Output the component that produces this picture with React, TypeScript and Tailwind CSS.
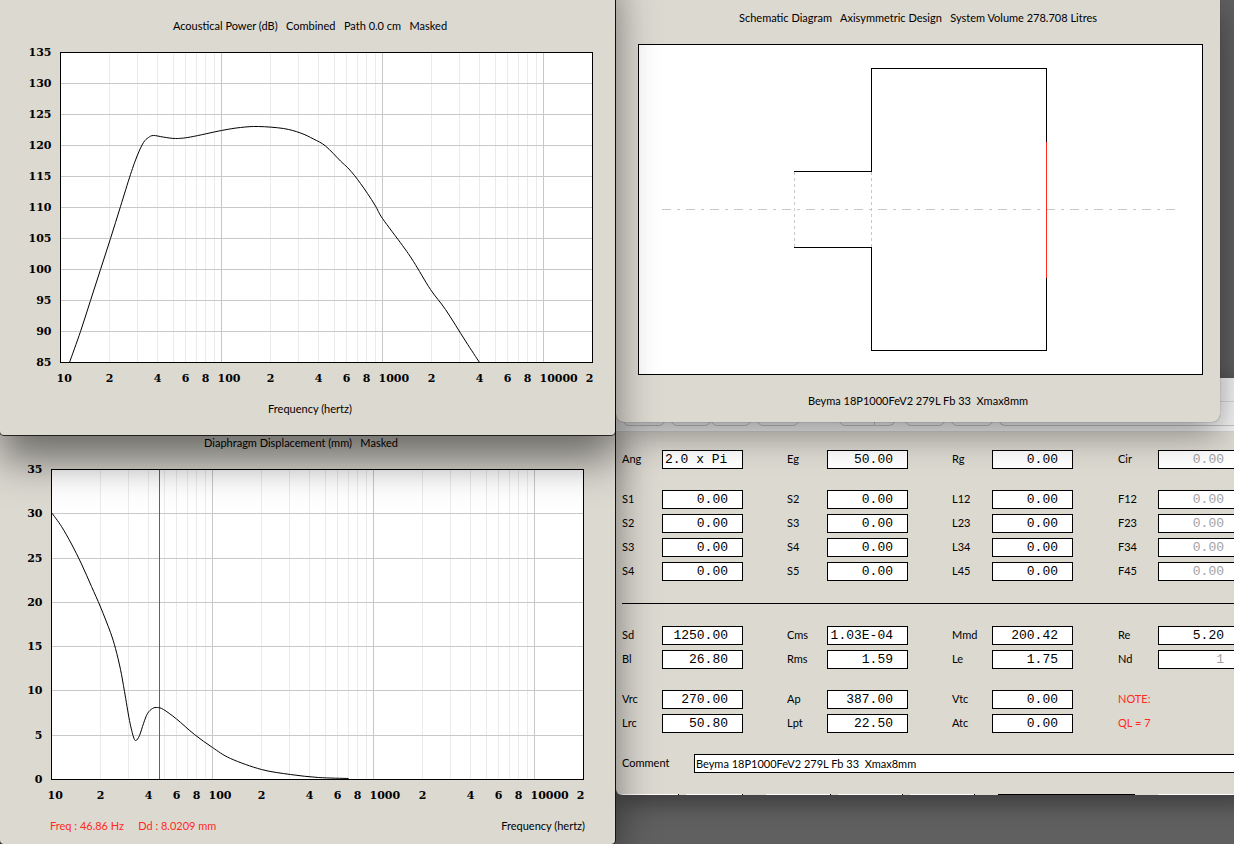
import type { ReactNode } from "react";

type Point = [number, number];

type ChartProps = {
    label: string;
    yLabels: number[];
    points: Point[];
    cursor?: number;
};

type Field = {
    name: string;
    value: string;
    disabled?: boolean;
    left?: boolean;
};

const PLOT_W = 532;
const PLOT_H = 310;
const DECADE = 161;

const powerCurve: Point[] = [
    [9, 310], [20, 279], [30, 248], [40, 217], [50, 186], [60, 154], [70, 122],
    [77, 102.5], [83, 90], [88, 85], [93, 83], [103, 84.6], [115, 86],
    [130, 84.5], [161, 78], [180, 75], [198, 74], [223, 76], [240, 80.5],
    [253, 86.5], [265, 93.5], [280, 108.5], [287, 115], [294, 123], [300, 131],
    [307, 141], [315, 153.5], [322, 166], [342, 193], [353, 209],
    [370, 237], [385, 257], [405, 288.5], [419, 310],
];

const displacementCurve: Point[] = [
    [0, 43], [10, 57], [20, 74.5], [30, 94.5], [40, 117], [49, 137.5], [59, 163],
    [64, 179], [69, 200], [73, 222], [78, 251], [82, 267.5], [84.5, 271],
    [88, 266], [92, 254], [96, 244], [101, 239], [106, 238], [112, 240],
    [125, 249.5], [143, 265], [161, 278], [179, 289], [210, 300],
    [239, 305], [267, 308], [297, 309],
];

// Catmull-Rom spline through the sample points
function toPath(points: Point[]) {
    let d = `M${points[0][0]} ${points[0][1]}`;
    for (let i = 0; i < points.length - 1; i++) {
        const p0 = points[i - 1] ?? points[i];
        const p1 = points[i];
        const p2 = points[i + 1];
        const p3 = points[i + 2] ?? p2;
        d += ` C${p1[0] + (p2[0] - p0[0]) / 6} ${p1[1] + (p2[1] - p0[1]) / 6}`;
        d += ` ${p2[0] - (p3[0] - p1[0]) / 6} ${p2[1] - (p3[1] - p1[1]) / 6}`;
        d += ` ${p2[0]} ${p2[1]}`;
    }
    return d;
}

function Chart({ label, yLabels, points, cursor }: ChartProps) {
    const verticals: { x: number; n: number; decade: number }[] = [];
    for (let decade = 0; decade < 4; decade++) {
        for (let n = 1; n < 10; n++) {
            const x = Math.floor(DECADE * (decade + Math.log10(n)) + 0.6);
            if (x <= PLOT_W - 2) verticals.push({ x, n, decade });
        }
    }
    const step = PLOT_H / (yLabels.length - 1);

    return (
        <svg
            width="580"
            height="347"
            role="img"
            aria-label={label}
            className="block font-['DejaVu_Serif',serif] text-[11px] font-bold"
        >
            <g transform="translate(34.5 10.5)">
                <rect width={PLOT_W} height={PLOT_H} fill="#fff" />
                <g shapeRendering="crispEdges" fill="none">
                    {verticals.map(({ x, n }) => n > 1 && (
                        <path key={x} d={`M${x} 0V${PLOT_H}`} stroke="#ebebeb" />
                    ))}
                    {yLabels.map((y, i) => (
                        <path key={y} d={`M0 ${Math.round(i * step)}H${PLOT_W}`} stroke="#c8c8c8" />
                    ))}
                    {verticals.map(({ x, n }) => n === 1 && (
                        <path key={x} d={`M${x} 0V${PLOT_H}`} stroke="#c8c8c8" />
                    ))}
                    <rect width={PLOT_W} height={PLOT_H} stroke="#000" />
                    {cursor && <path d={`M${cursor} 0V${PLOT_H - 1}`} stroke="#f0281c" />}
                </g>
                <path d={toPath(points)} fill="none" stroke="#000" />
                {yLabels.map((y, i) => (
                    <text key={y} x="-9" y={Math.round(i * step) + 3} textAnchor="end">{y}</text>
                ))}
                {verticals.map(({ x, n, decade }) => {
                    if (n === 1) {
                        return <text key={x} x={x - 4} y="329">{10 ** (decade + 1)}</text>;
                    }
                    return n % 2 === 0 && (
                        <text key={x} x={x} y="329" textAnchor="middle">{n}</text>
                    );
                })}
                <text x={PLOT_W + 1} y="329" textAnchor="end">2</text>
            </g>
        </svg>
    );
}

function Schematic() {
    return (
        <svg width="565" height="331" role="img" aria-label="Schematic diagram" className="block">
            <g fill="none" stroke="#000" shapeRendering="crispEdges" transform="translate(.5 .5)">
                <rect width="564" height="330" fill="#fff" />
                <path d="M23 165H537" stroke="#c8c8c8" strokeDasharray="9 6 3 6" />
                <path d="M156 127V203M233 127V203" stroke="#c8c8c8" strokeDasharray="3 3" />
                <path d="M155 127H233V24H408V306H233V203H155" />
                <path d="M408 97V233" stroke="#ff2a1c" />
            </g>
        </svg>
    );
}

function Row({ fields, children }: { fields: Field[]; children?: ReactNode }) {
    return (
        <div className="grid grid-cols-[165px_165px_166px_121px] h-6 items-center">
            {fields.map((field) => (
                <label key={field.name} className="flex items-center">
                    <span className="w-10">{field.name}</span>
                    <input
                        defaultValue={field.value}
                        disabled={field.disabled}
                        className={`w-[81px] h-[19px] border border-black bg-white pl-0.5 pr-3.5 font-['Liberation_Mono',monospace] text-[13px] disabled:text-neutral-400 ${field.left ? "text-left" : "text-right"}`}
                    />
                </label>
            ))}
            {children}
        </div>
    );
}

const zero = "0.00";

function ParameterForm() {
    return (
        <form className="pl-1.5 pt-[15px]">
            <Row
                fields={[
                    { name: "Ang", value: "2.0 x Pi", left: true },
                    { name: "Eg", value: "50.00" },
                    { name: "Rg", value: zero },
                    { name: "Cir", value: zero, disabled: true },
                ]}
            />
            <div className="mt-4">
                {[1, 2, 3, 4].map((n) => (
                    <Row
                        key={n}
                        fields={[
                            { name: `S${n}`, value: zero },
                            { name: `S${n + 1}`, value: zero },
                            { name: `L${n}${n + 1}`, value: zero },
                            { name: `F${n}${n + 1}`, value: zero, disabled: true },
                        ]}
                    />
                ))}
            </div>
            <hr className="mb-[19px] mt-5 border-black" />
            <Row
                fields={[
                    { name: "Sd", value: "1250.00" },
                    { name: "Cms", value: "1.03E-04" },
                    { name: "Mmd", value: "200.42" },
                    { name: "Re", value: "5.20" },
                ]}
            />
            <Row
                fields={[
                    { name: "Bl", value: "26.80" },
                    { name: "Rms", value: "1.59" },
                    { name: "Le", value: "1.75" },
                    { name: "Nd", value: "1", disabled: true },
                ]}
            />
            <div className="mt-4">
                <Row
                    fields={[
                        { name: "Vrc", value: "270.00" },
                        { name: "Ap", value: "387.00" },
                        { name: "Vtc", value: zero },
                    ]}
                >
                    <span className="text-[#ff2a1c]">NOTE:</span>
                </Row>
                <Row
                    fields={[
                        { name: "Lrc", value: "50.80" },
                        { name: "Lpt", value: "22.50" },
                        { name: "Atc", value: zero },
                    ]}
                >
                    <span className="text-[#ff2a1c]">QL = 7</span>
                </Row>
            </div>
            <label className="mt-4 flex h-6 items-center">
                <span className="w-[72px]">Comment</span>
                <input
                    defaultValue="Beyma 18P1000FeV2 279L Fb 33  Xmax8mm"
                    className="h-[19px] flex-1 border border-black bg-white px-px"
                />
            </label>
        </form>
    );
}

function Toolbar() {
    const button = "h-5 rounded-md border border-[#c4c4c4]";
    return (
        <div className="bg-[#f4f4f4]">
            <div className="h-6 border-b border-[#d8d8d8]" />
            <div className="flex h-[30px] items-end border-b border-[#d4d4d4] pb-[5px] pl-[7px]">
                <button aria-label="Back" className={`${button} w-[42px]`} />
                <button aria-label="Previous" className={`${button} ml-1.5 w-10`} />
                <button aria-label="Next" className={`${button} w-10`} />
                <button aria-label="View" className={`${button} ml-1.5 w-[42px]`} />
                <button aria-label="Group" className={`${button} ml-10 w-9 rounded-r-none`} />
                <button aria-label="Group options" className={`${button} w-5 rounded-l-none border-l-0`} />
                <button aria-label="Share" className={`${button} ml-2.5 w-10`} />
                <button aria-label="Tags" className={`${button} ml-1.5 w-[42px]`} />
                <input aria-label="Search" className={`${button} ml-1.5 flex-1 border-t-0`} />
            </div>
        </div>
    );
}

export default function App() {
    return (
        <main className="relative min-h-screen overflow-hidden bg-[#606060] font-[Lato,sans-serif] text-[11px] leading-4 text-black">
            {/* Parameters */}
            <section className="absolute left-[616px] top-[378px] h-[417px] w-[640px] overflow-hidden rounded-md bg-[#dcd9d1] shadow-[0_8px_24px_rgba(0,0,0,0.4)]">
                <Toolbar />
                <ParameterForm />
                {/* Tops of the controls that run past the window's lower edge */}
                <div className="mt-[19px] flex h-0.5 pl-1.5">
                    <span className="w-[57px] border-r border-black bg-white" />
                    <span className="ml-[7px] w-[57px] border-r border-black bg-white" />
                    <span className="ml-[23px] w-[65px] border-r border-black bg-white" />
                    <span className="ml-[7px] w-[65px] border-r border-black bg-white" />
                    <span className="ml-[7px] w-[65px] border-r border-black bg-white" />
                    <span className="ml-[23px] w-[137px] bg-black" />
                    <span className="ml-[23px] flex-1 bg-white" />
                </div>
            </section>

            {/* Diaphragm displacement */}
            <section className="absolute left-0 top-[420px] h-[424px] w-[615px] rounded-b bg-[#dcd9d1] pl-[17px] pt-[15px] shadow-[0_0_0_1px_rgba(0,0,0,0.7),0_12px_40px_rgba(0,0,0,0.5)]">
                <h2 className="w-[568px] whitespace-pre text-center">Diaphragm Displacement (mm)   Masked</h2>
                <div className="mt-2">
                    <Chart
                        label="Diaphragm displacement"
                        yLabels={[35, 30, 25, 20, 15, 10, 5, 0]}
                        points={displacementCurve}
                        cursor={108}
                    />
                </div>
                <div className="mt-3 flex w-[568px] justify-between pl-[33px]">
                    <p className="whitespace-pre text-[#ff2a1c]">Freq : 46.86 Hz     Dd : 8.0209 mm</p>
                    <p>Frequency (hertz)</p>
                </div>
            </section>

            {/* Schematic */}
            <section className="absolute left-[616px] top-0 h-[422px] w-[604px] rounded-b-lg bg-[#dcd9d1] px-[22px] pt-2.5 text-center shadow-[0_0_1px_rgba(0,0,0,0.6),0_12px_36px_rgba(0,0,0,0.4)]">
                <h2 className="whitespace-pre">Schematic Diagram   Axisymmetric Design   System Volume 278.708 Litres</h2>
                <div className="my-[18px]">
                    <Schematic />
                </div>
                <p className="whitespace-pre">Beyma 18P1000FeV2 279L Fb 33  Xmax8mm</p>
            </section>

            {/* Acoustical power, its title bar is above the top of the screen */}
            <section className="absolute -top-10 left-0 h-[475px] w-[615px] rounded-b bg-[#dcd9d1] pl-[26px] pt-[58px] shadow-[0_0_0_1px_rgba(0,0,0,0.75),0_25px_40px_rgba(0,0,0,0.5)]">
                <h2 className="w-[568px] whitespace-pre text-center">Acoustical Power (dB)   Combined   Path 0.0 cm   Masked</h2>
                <div className="mt-2">
                    <Chart
                        label="Acoustical power"
                        yLabels={[135, 130, 125, 120, 115, 110, 105, 100, 95, 90, 85]}
                        points={powerCurve}
                    />
                </div>
                <p className="mt-3 w-[568px] text-center">Frequency (hertz)</p>
            </section>
        </main>
    );
}
